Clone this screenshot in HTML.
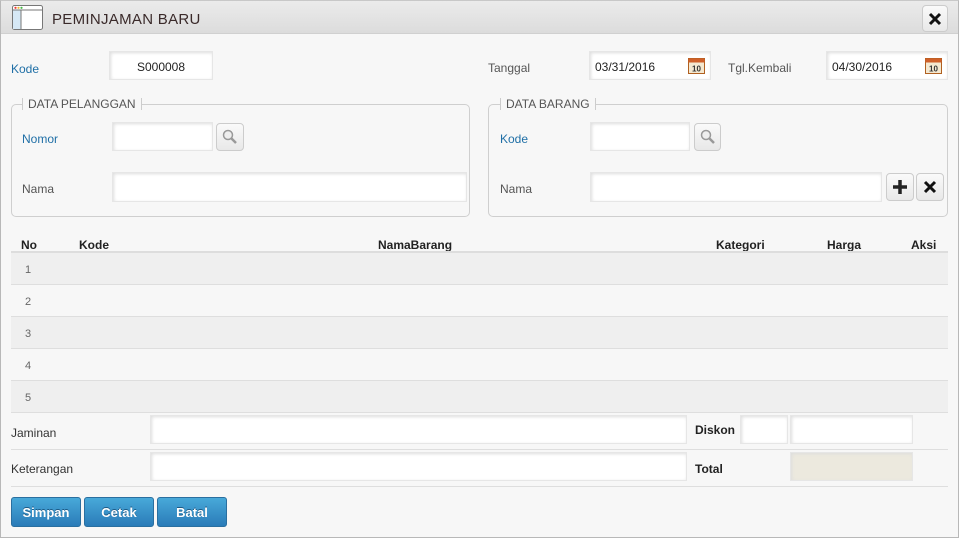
<!DOCTYPE html>
<html><head><meta charset="utf-8"><style>
*{box-sizing:border-box;margin:0;padding:0}
body{width:959px;height:538px;overflow:hidden;background:#f7f7f7;font-family:"Liberation Sans",Arial,sans-serif;font-size:12px;color:#333;position:relative}
.frame{position:absolute;left:0;top:0;width:959px;height:538px;border:1px solid #b8b8b8;border-top:1px solid #c8c8c8}
.title{position:absolute;left:1px;top:1px;width:957px;height:33px;background:linear-gradient(#ebebeb,#dcdcdc);border-bottom:1px solid #d0d0d0}
.title span{position:absolute;left:51px;top:10px;font-size:15px;color:#3a2a2a;letter-spacing:.3px}
.abs{position:absolute}
.lbl{position:absolute;font-size:12px;color:#555}
.blue{color:#1f6fa6}
.inp{position:absolute;background:#fff;border:1px solid #e6e6e6;box-shadow:inset 1px 1px 3px #ddd;font-size:12px;color:#222;padding:2px 5px 0;display:flex;align-items:center}
.btnsm{position:absolute;border:1px solid #ccc;border-radius:4px;background:linear-gradient(#fafafa,#e8e8e8)}
fieldset{position:absolute;border:1px solid #cfcfcf;border-radius:5px}
.leg{position:absolute;background:#f7f7f7;padding:0 5px;border-left:1px solid #ccc;border-right:1px solid #ccc;font-size:12px;color:#555;height:12px;line-height:12px}
.row{position:absolute;left:11px;width:937px;height:32px;border-bottom:1px solid #dedede}
.row span{position:absolute;left:14px;top:11px;font-size:11px;color:#666}
.th{position:absolute;top:238px;font-weight:bold;font-size:12px;color:#222}
.bb{position:absolute;top:497px;height:30px;border-radius:3px;background:linear-gradient(#48a9d9,#2a7bb8);border:1px solid #2a6fa0;color:#fff;font-weight:bold;font-size:13px;text-align:center;line-height:29px;text-shadow:0 -1px 0 #1d5a85}
</style></head><body>
<div class="frame"></div>
<div class="title">
<svg class="abs" style="left:11px;top:4px" width="31" height="25" viewBox="0 0 31 25"><rect x="0.5" y="0.5" width="30" height="24" rx="2" fill="#fff" stroke="#777"/><rect x="1" y="5" width="8" height="19" fill="#d6e8f5"/><line x1="1" y1="5" x2="30" y2="5" stroke="#777"/><line x1="9" y1="5" x2="9" y2="24" stroke="#777"/><circle cx="3.5" cy="2.8" r="1.1" fill="#e33"/><circle cx="6.5" cy="2.8" r="1.1" fill="#eb3"/><circle cx="9.5" cy="2.8" r="1.1" fill="#4b4"/></svg>
<span>PEMINJAMAN BARU</span>
<div class="btnsm" style="left:921px;top:4px;width:26px;height:27px;border-radius:4px"><svg width="24" height="25" viewBox="0 0 24 25"><path d="M7 8l10 10M17 8L7 18" stroke="#111" stroke-width="3"/></svg></div>
</div>

<div class="lbl blue" style="left:11px;top:62px">Kode</div>
<div class="inp" style="left:109px;top:51px;width:104px;height:29px;justify-content:center">S000008</div>
<div class="lbl" style="left:488px;top:61px">Tanggal</div>
<div class="inp" style="left:589px;top:51px;width:122px;height:29px">03/31/2016</div>
<div class="lbl" style="left:728px;top:61px">Tgl.Kembali</div>
<div class="inp" style="left:826px;top:51px;width:122px;height:29px">04/30/2016</div>
<svg class="abs" style="left:688px;top:57px" width="17" height="17" viewBox="0 0 17 17"><rect x="0.5" y="1.5" width="16" height="15" fill="#f4e8d0" stroke="#b06020"/><rect x="0.5" y="1.5" width="16" height="4" fill="#d0602a"/><text x="8.5" y="14.5" font-size="8" font-weight="bold" text-anchor="middle" font-family="Liberation Sans" fill="#333">10</text></svg>
<svg class="abs" style="left:925px;top:57px" width="17" height="17" viewBox="0 0 17 17"><rect x="0.5" y="1.5" width="16" height="15" fill="#f4e8d0" stroke="#b06020"/><rect x="0.5" y="1.5" width="16" height="4" fill="#d0602a"/><text x="8.5" y="14.5" font-size="8" font-weight="bold" text-anchor="middle" font-family="Liberation Sans" fill="#333">10</text></svg>

<fieldset style="left:11px;top:104px;width:459px;height:113px"></fieldset>
<div class="leg" style="left:22px;top:98px">DATA PELANGGAN</div>
<div class="lbl blue" style="left:22px;top:132px">Nomor</div>
<div class="inp" style="left:112px;top:122px;width:101px;height:29px"></div>
<div class="btnsm" style="left:216px;top:123px;width:28px;height:28px"><svg width="26" height="26" viewBox="0 0 26 26"><circle cx="11" cy="11" r="4.5" fill="#eee" stroke="#999" stroke-width="1.5"/><path d="M14 14l5 5" stroke="#999" stroke-width="2.5"/></svg></div>
<div class="lbl" style="left:22px;top:182px">Nama</div>
<div class="inp" style="left:112px;top:172px;width:355px;height:30px"></div>

<fieldset style="left:488px;top:104px;width:460px;height:113px"></fieldset>
<div class="leg" style="left:500px;top:98px">DATA BARANG</div>
<div class="lbl blue" style="left:500px;top:132px">Kode</div>
<div class="inp" style="left:590px;top:122px;width:100px;height:29px"></div>
<div class="btnsm" style="left:694px;top:123px;width:27px;height:28px"><svg width="26" height="26" viewBox="0 0 26 26"><circle cx="11" cy="11" r="4.5" fill="#eee" stroke="#999" stroke-width="1.5"/><path d="M14 14l5 5" stroke="#999" stroke-width="2.5"/></svg></div>
<div class="lbl" style="left:500px;top:182px">Nama</div>
<div class="inp" style="left:590px;top:172px;width:292px;height:30px"></div>
<div class="btnsm" style="left:886px;top:173px;width:28px;height:28px"><svg width="26" height="26" viewBox="0 0 26 26"><path d="M13 6v14M6 13h14" stroke="#222" stroke-width="3.5"/></svg></div>
<div class="btnsm" style="left:916px;top:173px;width:28px;height:28px"><svg width="26" height="26" viewBox="0 0 26 26"><path d="M8 8l10 10M18 8L8 18" stroke="#111" stroke-width="3"/></svg></div>

<div class="th" style="left:21px">No</div>
<div class="th" style="left:79px">Kode</div>
<div class="th" style="left:378px">NamaBarang</div>
<div class="th" style="left:716px">Kategori</div>
<div class="th" style="left:827px">Harga</div>
<div class="th" style="left:911px">Aksi</div>
<div class="abs" style="left:11px;top:251px;width:937px;height:2px;background:#ddd"></div>
<div class="row" style="top:253px;background:#efefef"><span>1</span></div>
<div class="row" style="top:285px"><span>2</span></div>
<div class="row" style="top:317px;background:#efefef"><span>3</span></div>
<div class="row" style="top:349px"><span>4</span></div>
<div class="row" style="top:381px;background:#efefef"><span>5</span></div>

<div class="row" style="top:413px;height:37px"></div>
<div class="row" style="top:450px;height:37px"></div>
<div class="lbl" style="left:11px;top:426px;color:#333">Jaminan</div>
<div class="inp" style="left:150px;top:415px;width:537px;height:29px"></div>
<div class="lbl" style="left:695px;top:423px;font-weight:bold;color:#222">Diskon</div>
<div class="inp" style="left:740px;top:415px;width:48px;height:29px"></div>
<div class="inp" style="left:790px;top:415px;width:123px;height:29px"></div>
<div class="lbl" style="left:11px;top:462px;color:#333">Keterangan</div>
<div class="inp" style="left:150px;top:452px;width:537px;height:29px"></div>
<div class="lbl" style="left:695px;top:462px;font-weight:bold;color:#222">Total</div>
<div class="inp" style="left:790px;top:452px;width:123px;height:29px;background:#ece9de"></div>

<div class="bb" style="left:11px;width:70px">Simpan</div>
<div class="bb" style="left:84px;width:70px">Cetak</div>
<div class="bb" style="left:157px;width:70px">Batal</div>
</body></html>
